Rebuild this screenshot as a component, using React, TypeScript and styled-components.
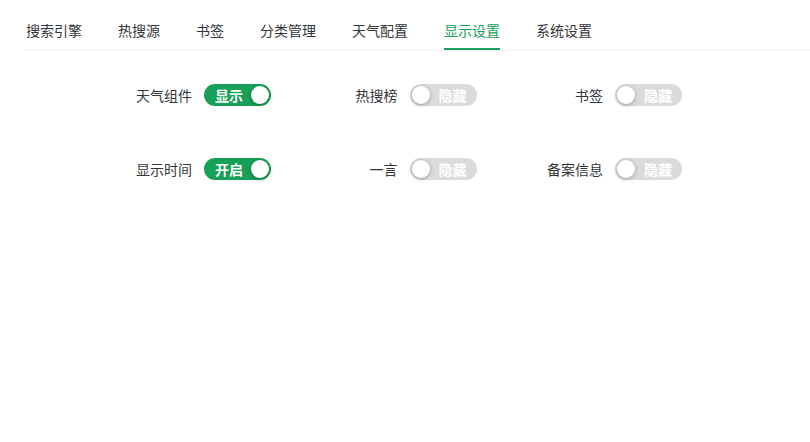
import React from "react";
import styled, { createGlobalStyle } from "styled-components";

const Global = createGlobalStyle`
  html, body { margin: 0; padding: 0; background: #fff; }
  body { font-family: "Noto Sans CJK SC", "Noto Sans", sans-serif; color: #333639; }
`;

const Page = styled.div`
  width: 810px;
  height: 442px;
  box-sizing: border-box;
  padding-top: 10px;
`;

const TabBar = styled.div`
  margin-left: 26px;
  display: flex;
  gap: 36px;
  border-bottom: 1px solid #efeff5;
`;

const Tab = styled.div<{ $active?: boolean }>`
  position: relative;
  height: 40px;
  line-height: 40px;
  font-size: 14px;
  color: ${(p) => (p.$active ? "#18a058" : "#333639")};
  white-space: nowrap;
  &::after {
    content: "";
    display: ${(p) => (p.$active ? "block" : "none")};
    position: absolute;
    left: 0;
    right: 0;
    bottom: 0;
    height: 2px;
    background: #18a058;
  }
`;

const Form = styled.div`
  padding: 28px 0 0 104px;
  display: grid;
  grid-template-columns: repeat(3, 205.5px);
  grid-auto-rows: 32px;
  row-gap: 42px;
`;

const Item = styled.div`
  display: flex;
  align-items: center;
`;

const Label = styled.div`
  width: 100px;
  box-sizing: border-box;
  padding-right: 12px;
  text-align: right;
  font-size: 14px;
  color: #333639;
  white-space: nowrap;
`;

const Rail = styled.div<{ $on: boolean }>`
  width: 67px;
  height: 22px;
  box-sizing: border-box;
  border-radius: 11px;
  padding: 0 2px;
  display: flex;
  align-items: center;
  flex-direction: ${(p) => (p.$on ? "row" : "row-reverse")};
  justify-content: space-between;
  background: ${(p) => (p.$on ? "#18a058" : "#dbdbdb")};
`;

const RailText = styled.span<{ $on: boolean }>`
  font-size: 14px;
  font-weight: 600;
  color: #fff;
  line-height: 22px;
  margin: ${(p) => (p.$on ? "0 0 0 9px" : "0 auto 0 9px")};
  white-space: nowrap;
`;

const Knob = styled.span`
  width: 18px;
  height: 18px;
  border-radius: 50%;
  background: #fff;
  box-shadow: 0 1px 4px rgba(0, 0, 0, 0.3);
  flex: none;
`;

const Switch = ({ on, text }: { on: boolean; text: string }) => (
  <Rail $on={on}>
    <RailText $on={on}>{text}</RailText>
    <Knob />
  </Rail>
);

const tabs = ["搜索引擎", "热搜源", "书签", "分类管理", "天气配置", "显示设置", "系统设置"];

const items = [
  { label: "天气组件", on: true, text: "显示" },
  { label: "热搜榜", on: false, text: "隐藏" },
  { label: "书签", on: false, text: "隐藏" },
  { label: "显示时间", on: true, text: "开启" },
  { label: "一言", on: false, text: "隐藏" },
  { label: "备案信息", on: false, text: "隐藏" },
];

export default function App() {
  return (
    <Page>
      <Global />
      <TabBar>
        {tabs.map((t) => (
          <Tab key={t} $active={t === "显示设置"}>
            {t}
          </Tab>
        ))}
      </TabBar>
      <Form>
        {items.map((it) => (
          <Item key={it.label}>
            <Label>{it.label}</Label>
            <Switch on={it.on} text={it.text} />
          </Item>
        ))}
      </Form>
    </Page>
  );
}
